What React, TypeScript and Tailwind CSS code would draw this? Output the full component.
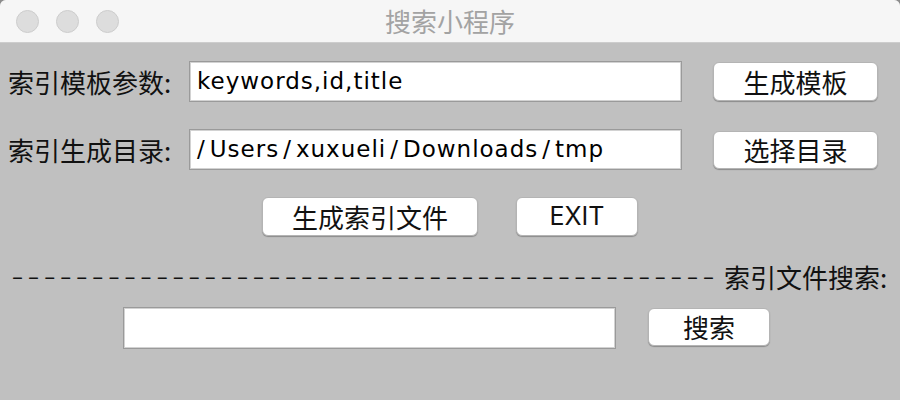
import React from "react";

const cjk = "font-['Noto_Sans_CJK_SC','Noto_Sans',sans-serif]";
const latin = "font-['DejaVu_Sans','Noto_Sans_CJK_SC',sans-serif]";

function Btn({ children, w, h }: { children: React.ReactNode; w: string; h: string }) {
  return (
    <div
      className={`${w} ${h} ${cjk} flex items-center justify-center rounded-[6px] border border-[#b4b4b4] bg-white text-[26px] leading-none text-[#111] shadow-[0_1px_1px_rgba(0,0,0,0.28)]`}
    >
      {children}
    </div>
  );
}

function Field({ children, w, h }: { children?: React.ReactNode; w: string; h: string }) {
  return (
    <div
      className={`${w} ${h} ${latin} flex items-center whitespace-nowrap border border-[#9a9a9a] bg-white pl-[7px] text-[23px] tracking-[1px] text-black shadow-[inset_0_0_0_1px_#d2d2d2]`}
    >
      {children}
    </div>
  );
}

function Slash() {
  return <span className="px-[4px]">/</span>;
}

export default function App() {
  const dashes = "–".repeat(44);
  return (
    <div className="h-[400px] w-[900px] bg-[#8c8c8c]">
      <div className="flex h-[400px] w-[900px] flex-col overflow-hidden rounded-t-[6px] bg-[#c0c0c0]">
        {/* title bar */}
        <div className="relative flex h-[43px] shrink-0 items-center border-b border-[#cdcdcd] bg-[#f6f6f6]">
          <div className="flex gap-[17px] pl-[16px]">
            <div className="h-[23px] w-[23px] rounded-full border border-[#cdcdcd] bg-[#dddddd]" />
            <div className="h-[23px] w-[23px] rounded-full border border-[#cdcdcd] bg-[#dddddd]" />
            <div className="h-[23px] w-[23px] rounded-full border border-[#cdcdcd] bg-[#dddddd]" />
          </div>
          <div className={`pointer-events-none absolute inset-x-0 top-[8px] text-center ${cjk} text-[26px] leading-none text-[#a3a3a3]`}>
            搜索小程序
          </div>
        </div>

        {/* row 1 */}
        <div className="mt-[18px] flex items-center pl-[8px]">
          <div className={`w-[181px] ${cjk} text-[26px] leading-none text-[#111]`}>索引模板参数:</div>
          <Field w="w-[493px]" h="h-[41px]">keywords,id,title</Field>
          <div className="ml-[31px]">
            <Btn w="w-[165px]" h="h-[39px]">生成模板</Btn>
          </div>
        </div>

        {/* row 2 */}
        <div className="mt-[27px] flex items-center pl-[8px]">
          <div className={`w-[181px] ${cjk} text-[26px] leading-none text-[#111]`}>索引生成目录:</div>
          <Field w="w-[493px]" h="h-[41px]">
            <span className="pr-[4px]">/</span>Users<Slash />xuxueli<Slash />Downloads<Slash />tmp
          </Field>
          <div className="ml-[31px]">
            <Btn w="w-[165px]" h="h-[38px]">选择目录</Btn>
          </div>
        </div>

        {/* row 3 */}
        <div className="mt-[27px] flex justify-center gap-[38px]">
          <Btn w="w-[216px]" h="h-[39px]">生成索引文件</Btn>
          <Btn w="w-[122px]" h="h-[39px]">
            <span className="font-['Inter',sans-serif] text-[25px]">EXIT</span>
          </Btn>
        </div>

        {/* row 4 */}
        <div className="mt-[27px] flex h-[28px] items-center pl-[12px]">
          <div className={`${latin} whitespace-nowrap text-[22px] leading-none tracking-[5.07px] text-[#111]`}>
            {dashes}
          </div>
          <div className={`ml-[5px] ${cjk} text-[26px] leading-none text-[#111]`}>索引文件搜索:</div>
        </div>

        {/* row 5 */}
        <div className="mt-[16px] flex items-start pl-[123px]">
          <Field w="w-[493px]" h="h-[42px]" />
          <div className="ml-[32px] mt-[1px]">
            <Btn w="w-[122px]" h="h-[38px]">搜索</Btn>
          </div>
        </div>
      </div>
    </div>
  );
}
